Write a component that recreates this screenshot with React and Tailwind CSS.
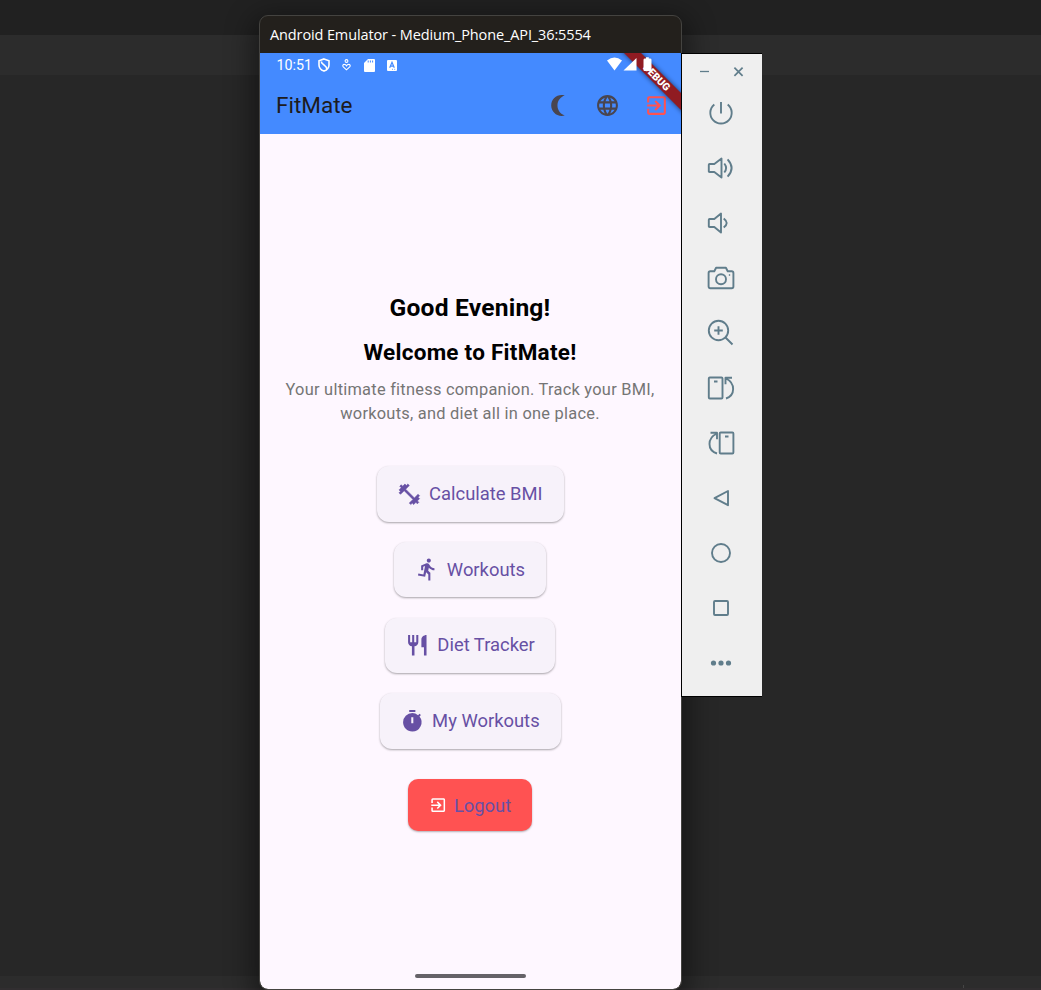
import React from "react";
import {
  MdDirectionsRun,
  MdRestaurant,
  MdTimer,
  MdExitToApp,
  MdLanguage,
} from "react-icons/md";

function Backdrop() {
  return (
    <div className="col-start-1 row-start-1 flex h-[990px] flex-col bg-[#272727]">
      <div className="h-[35px] bg-[#212121]" />
      <div className="h-10 bg-[#2c2c2c]" />
      <div className="flex-1" />
      <div className="flex h-3 items-end bg-[#2c2c2c] pl-[963px]">
        <div className="h-[3px] w-px bg-[#454545]" />
      </div>
      <div className="h-0.5 bg-[#312e30]" />
    </div>
  );
}

function StatusBar() {
  return (
    <div className="flex h-6 items-center pl-4 text-white">
      <span className="w-[37px] pl-[0.5px] text-[14.3px] leading-[23px] whitespace-nowrap">10:51</span>
      <svg className="ml-[5px] h-[14px] w-3" viewBox="0 0 12 14" fill="none" stroke="#fff" strokeWidth="1.6">
        <path d="M6 .9L11 2.7V7c0 2.8-2.1 5-5 6.1C3.100 12 1 9.800 1 7V2.700z" />
        <path d="M3.300 3.500c0 3 5.500 4 5.500 7.500" />
      </svg>
      <svg className="ml-3 h-3 w-[9px]" viewBox="0 0 9 12" fill="none" stroke="#fff" strokeWidth="1.100">
        <circle cx="4.500" cy="2" r="1.400" />
        <path d="M4.500 10.800L1.300 7.900C.2 6.500 1.200 5.300 2.400 5.400c1 0 1.700.7 2.100 1.400.4-.7 1.100-1.400 2.100-1.400 1.200-.1 2.200 1.100 1.100 2.500z" />
      </svg>
      <svg className="ml-[13px] h-[13px] w-[11px]" viewBox="0 0 11 13" fill="#fff">
        <path d="M4 0h6a1 1 0 011 1v11a1 1 0 01-1 1H1a1 1 0 01-1-1V4z" />
        <path d="M4.200 1.500v2M6.400 1.500v2M8.600 1.500v2" stroke="#448aff" strokeWidth="1" />
      </svg>
      <svg className="ml-3 h-[11px] w-[10px]" viewBox="0 0 10 11">
        <rect width="10" height="11" rx="1" fill="#fff" />
        <path d="M2.700 7.800L5 2.300l2.300 5.500M3.500 6.200h3" fill="none" stroke="#448aff" strokeWidth="1.200" />
        <path d="M5 9.300h1M7.200 9.300h1" stroke="#448aff" strokeWidth=".8" />
      </svg>
    </div>
  );
}

function AppBar() {
  return (
    <div className="flex h-[57px] items-center pl-4">
      <h1 className="flex-1 pb-0.5 text-[22.5px] leading-7 font-normal whitespace-nowrap text-[#1d1b20]">FitMate</h1>
      <div className="flex items-center gap-6 pr-[12.5px] text-[#49454f]">
        <svg className="size-[25px]" viewBox="0 0 24 24" fill="currentColor">
          <path d="M15 2c1.050 0 2.050.16 3 .46-4.060 1.270-7 5.060-7 9.540 0 4.480 2.940 8.270 7 9.540-.95.3-1.950.46-3 .46-5.520 0-10-4.480-10-10S9.480 2 15 2z" />
        </svg>
        <MdLanguage className="size-[25px]" />
        <MdExitToApp className="size-[25px] text-[#ff5252]" />
      </div>
    </div>
  );
}

function DebugBanner() {
  return (
    <svg className="absolute top-0 right-0" width="90" height="81" viewBox="591 53 90 81">
      <defs>
        <filter id="soft" x="-50%" y="-50%" width="200%" height="200%">
          <feGaussianBlur stdDeviation="2.600" />
        </filter>
      </defs>
      <path d="M604 33h17l80 80v17z" fill="#000" opacity=".6" filter="url(#soft)" />
      <path d="M604 33h17l80 80v17z" fill="#901b22" />
      <text
        x="656.75"
        y="80.900"
        transform="rotate(45 656.75 77.25)"
        textAnchor="middle"
        fill="#fff"
        className="font-['Roboto',sans-serif] text-[10.4px] font-black"
      >
        DEBUG
      </text>
      <path d="M607 60.500Q614.500 54.500 622 60.500L614.500 70.500z" fill="#fff" />
      <path d="M636.500 58V70.500H623.500z" fill="#fff" />
      <path d="M645 58.500h1v-1.200h2.800v1.200h1.200q1.500 0 1.500 1.200V70q0 1-1.200 1h-5.600q-1.200 0-1.200-1V59.700q0-1.200 1.500-1.200z" fill="#fff" />
    </svg>
  );
}

function Dumbbell({ className }) {
  return (
    <svg className={className} viewBox="0 0 24 24" fill="currentColor" stroke="currentColor" strokeWidth=".6">
      <path d="M20.570 14.860L22 13.430 20.570 12 17 15.570 8.430 7 12 3.430 10.570 2 9.140 3.430 7.710 2 5.570 4.140 4.140 2.710 2.710 4.140l1.430 1.430L2 7.710l1.430 1.430L2 10.570 3.430 12 7 8.430 15.570 17 12 20.570 13.430 22l1.430-1.430L16.290 22l2.140-2.140 1.430 1.430 1.430-1.430-1.430-1.430L22 16.290z" />
    </svg>
  );
}

function MenuButton({ icon: Icon, label, width }) {
  return (
    <button
      className={`${width} flex h-[55.6px] items-center rounded-[12px] bg-[#f7f2fa] pl-[20.5px] text-[#6750a4] shadow-[0_1px_2px_rgba(0,0,0,0.28),0_1px_3px_rgba(0,0,0,0.08)]`}
    >
      <Icon className="size-[24.6px] shrink-0" />
      <span className="ml-[7.500px] text-[18.4px] leading-6 whitespace-nowrap">{label}</span>
    </button>
  );
}

function Phone() {
  return (
    <div className="mt-[15px] ml-[259px] flex h-[975px] w-[423px] shrink-0 flex-col overflow-hidden rounded-[9px] border border-[#444340] bg-[#23201c] shadow-[0_8px_28px_6px_rgba(0,0,0,0.45)]">
      <div className="flex h-[37px] shrink-0 items-center pl-[10px] font-['Open_Sans','Noto_Sans',sans-serif] text-[14.5px] tracking-[-0.12px] whitespace-nowrap text-white">
        Android Emulator - Medium_Phone_API_36:5554
      </div>
      <div className="relative h-[81px] shrink-0 bg-[#448aff]">
        <StatusBar />
        <AppBar />
        <DebugBanner />
      </div>
      <main className="flex flex-1 flex-col items-center rounded-b-[8px] bg-[#fef7ff] pr-px">
        <h2 className="mt-[158px] text-[24.6px] leading-8 font-bold tracking-[0.2px] whitespace-nowrap text-black">
          Good Evening!
        </h2>
        <h3 className="mt-3 text-[22.5px] leading-8 font-bold tracking-[0.25px] whitespace-nowrap text-black">
          Welcome to FitMate!
        </h3>
        <p className="mt-[10px] text-center text-[16.4px] leading-[23.500px] tracking-[0.25px] whitespace-nowrap text-[#757575]">
          Your ultimate fitness companion. Track your BMI,
          <br />
          workouts, and diet all in one place.
        </p>
        <div className="mt-[41px] flex flex-col items-center gap-[20.200px]">
          <MenuButton icon={Dumbbell} label="Calculate BMI" width="w-[187px]" />
          <MenuButton icon={MdDirectionsRun} label="Workouts" width="w-[151.5px]" />
          <MenuButton icon={MdRestaurant} label="Diet Tracker" width="w-[170.5px]" />
          <MenuButton icon={MdTimer} label="My Workouts" width="w-[181px]" />
        </div>
        <button className="mt-[30.5px] flex h-[52px] w-[124px] items-center rounded-[10px] bg-[#ff5252] pl-[20.5px] text-[#6750a4] shadow-[0_1px_2px_rgba(0,0,0,0.3)]">
          <MdExitToApp className="size-[18.4px] shrink-0 text-white" />
          <span className="ml-[7px] pt-px text-[18.4px] leading-6 whitespace-nowrap">Logout</span>
        </button>
        <div className="mt-auto mb-[11px] h-1 w-[111px] rounded-full bg-[#656268]" />
      </main>
    </div>
  );
}

const tools = [
  <path key="power" d="M15 4v11.500M8.300 6.500a10.700 10.700 0 1013.400 0" />,
  <g key="loud">
    <path d="M3.600 11h4.700L15.500 5.500v19L8.300 19H3.600q-.8 0-.8-.8v-6.400q0-.8.8-.8zM18.300 10.500q3.600 4.500 0 9M21.600 6.300q8 8.700 0 17.400" />
  </g>,
  <g key="quiet">
    <path d="M3.600 11h4.700L15 5.500v19L8.300 19H3.600q-.8 0-.8-.8v-6.400q0-.8.8-.8zM17.700 10.500q6 4.500 0 9" />
  </g>,
  <g key="camera">
    <path d="M4.300 8.300h4l1.800-3.500h9.800L21.700 8.300h4q1.700 0 1.700 1.700v13.500q0 1.700-1.700 1.700H4.300q-1.700 0-1.700-1.700V10q0-1.700 1.700-1.700z" />
    <circle cx="15" cy="16.300" r="5" />
    <circle cx="23.500" cy="12" r=".5" strokeWidth="1" />
  </g>,
  <g key="zoom">
    <circle cx="12.500" cy="12.500" r="9.700" />
    <path d="M12.500 8.200v8.600M8.200 12.500h8.600M19.500 19.500L26.500 26.500" />
  </g>,
  <g key="rotate-left">
    <rect x="2.800" y="4.500" width="13.700" height="21" rx="1" />
    <path d="M8 8.500h3.500M20 25.500c9.500-3 9.500-15.500 0-20M26 4.800h-6.500v6.500" />
  </g>,
  <g key="rotate-right">
    <rect x="13.700" y="4.500" width="13.700" height="21" rx="1" />
    <path d="M19 8.500h3.500M11 25.500c-10-3-10-15.500 0-20M4.500 4.800h6.500v6.500" />
  </g>,
  <path key="back" d="M22 8v14.200L8.500 15.100z" />,
  <circle key="home" cx="15" cy="15" r="9" />,
  <rect key="overview" x="8" y="8" width="14" height="14" rx="1" />,
  <g key="more" fill="#607d8b" stroke="none">
    <circle cx="7.500" cy="15" r="2.600" />
    <circle cx="15" cy="15" r="2.600" />
    <circle cx="22.500" cy="15" r="2.600" />
  </g>,
];

function Toolbar() {
  return (
    <aside className="mt-[53px] -ml-px flex h-[644px] w-[81px] flex-col border-y border-l border-black bg-[#efefef]">
      <div className="flex h-[34px] items-center gap-[18px] pl-[15px]">
        <svg className="size-4" viewBox="0 0 16 16" stroke="#607d8b" strokeWidth="1.300">
          <path d="M3 8.500h9" />
        </svg>
        <svg className="size-4" viewBox="0 0 16 16" stroke="#607d8b" strokeWidth="1.700">
          <path d="M3.400 4.700l8.200 8.200M11.600 4.700l-8.200 8.200" />
        </svg>
      </div>
      <div className="mt-[10px] flex flex-col items-center gap-[25px] pr-[2px]">
        {tools.map((shape, i) => (
          <svg
            key={i}
            className="size-[30px]"
            viewBox="0 0 30 30"
            fill="none"
            stroke="#607d8b"
            strokeWidth="1.900"
            strokeLinejoin="round"
          >
            {shape}
          </svg>
        ))}
      </div>
    </aside>
  );
}

export default function App() {
  return (
    <div className="grid h-[990px] w-[1041px] overflow-hidden font-['Roboto',sans-serif]">
      <Backdrop />
      <div className="z-10 col-start-1 row-start-1 flex items-start">
        <Phone />
        <Toolbar />
      </div>
    </div>
  );
}
